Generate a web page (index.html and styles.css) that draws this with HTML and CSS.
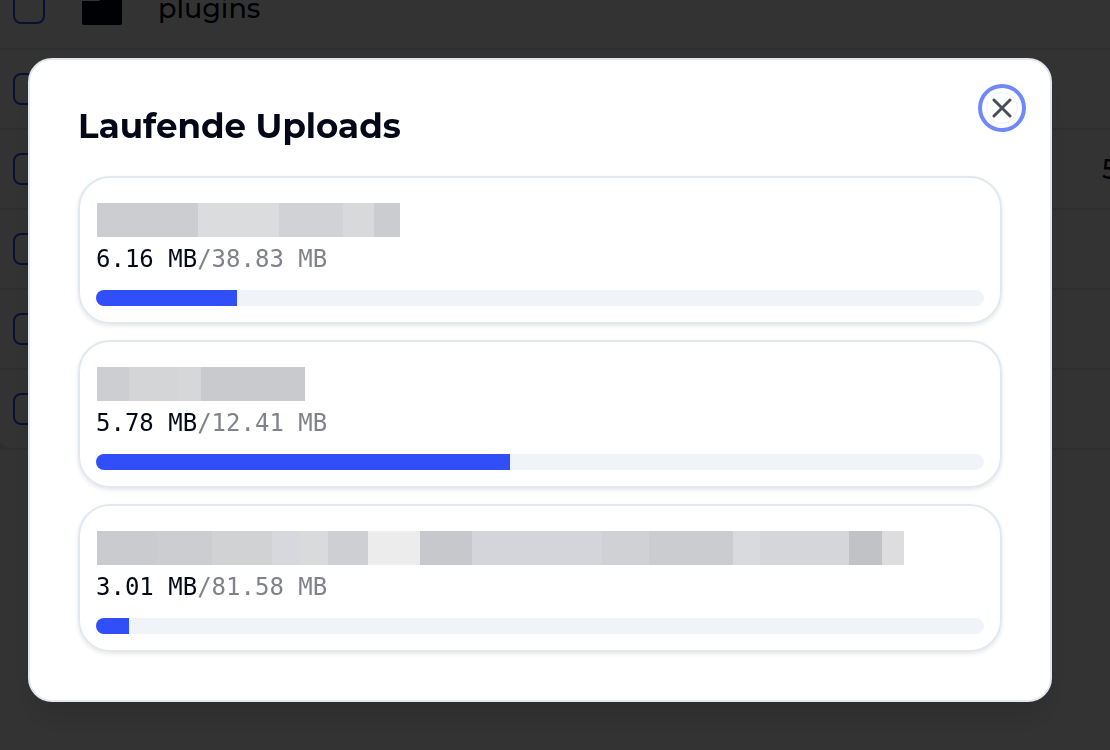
FILE: index.html
```html
<!DOCTYPE html>
<html lang="de">
<head>
    <meta charset="UTF-8">
    <meta name="viewport" content="width=device-width, initial-scale=1.0">
    <title>Laufende Uploads</title>
    <link rel="stylesheet" href="styles.css">
</head>
<body>
    <!-- File list behind the dialog -->
    <main class="files">
        <table class="files-table">
            <tbody>
                <tr>
                    <td class="check"><input type="checkbox" aria-label="plugins"></td>
                    <td class="icon">
                        <svg class="folder" viewBox="0 0 40 34" aria-hidden="true">
                            <path d="M20 0h18a2 2 0 0 1 2 2v30a2 2 0 0 1-2 2H2a2 2 0 0 1-2-2V10h17l3-3z"/>
                        </svg>
                    </td>
                    <td class="name">plugins</td>
                    <td class="size"></td>
                </tr>
                <tr>
                    <td class="check"><input type="checkbox" aria-label="Datei 2"></td>
                    <td class="icon"></td>
                    <td class="name"></td>
                    <td class="size"></td>
                </tr>
                <tr>
                    <td class="check"><input type="checkbox" aria-label="Datei 3"></td>
                    <td class="icon"></td>
                    <td class="name"></td>
                    <td class="size">5</td>
                </tr>
                <tr>
                    <td class="check"><input type="checkbox" aria-label="Datei 4"></td>
                    <td class="icon"></td>
                    <td class="name"></td>
                    <td class="size"></td>
                </tr>
                <tr>
                    <td class="check"><input type="checkbox" aria-label="Datei 5"></td>
                    <td class="icon"></td>
                    <td class="name"></td>
                    <td class="size"></td>
                </tr>
                <tr>
                    <td class="check"><input type="checkbox" aria-label="Datei 6"></td>
                    <td class="icon"></td>
                    <td class="name"></td>
                    <td class="size"></td>
                </tr>
            </tbody>
        </table>
    </main>

    <!-- Upload dialog -->
    <div class="overlay">
        <section class="modal" role="dialog" aria-modal="true" aria-labelledby="uploads-title">
            <h1 id="uploads-title">Laufende Uploads</h1>
            <button class="close" type="button" aria-label="Schließen">
                <svg viewBox="0 0 24 24" aria-hidden="true">
                    <path d="M4 4l16 16M20 4L4 20"/>
                </svg>
            </button>

            <div class="uploads">
                <article class="upload">
                    <div class="filename"><span class="redacted redacted-short"></span></div>
                    <label class="amount" for="upload-1">6.16 MB<span class="total">/38.83 MB</span></label>
                    <progress id="upload-1" value="6.16" max="38.83"></progress>
                </article>
                <article class="upload">
                    <div class="filename"><span class="redacted redacted-tiny"></span></div>
                    <label class="amount" for="upload-2">5.78 MB<span class="total">/12.41 MB</span></label>
                    <progress id="upload-2" value="5.78" max="12.41"></progress>
                </article>
                <article class="upload">
                    <div class="filename"><span class="redacted redacted-long"></span></div>
                    <label class="amount" for="upload-3">3.01 MB<span class="total">/81.58 MB</span></label>
                    <progress id="upload-3" value="3.01" max="81.58"></progress>
                </article>
            </div>
        </section>
    </div>
</body>
</html>
```

FILE: styles.css
```css
* {
    box-sizing: border-box;
}

body {
    margin: 0;
    font-family: Montserrat, Inter, sans-serif;
    color: #020817;
    background: #fff;
    overflow: hidden;
}

/* File list, scrolled so that the first row is cut */
.files {
    margin: -34px -200px 0 -4px;
    border: 2px solid #e2e8f0;
    border-radius: 16px;
    box-shadow: 0 2px 6px rgba(0, 0, 0, 0.2);
}

.files-table {
    width: 100%;
    table-layout: fixed;
    border-collapse: separate;
    border-spacing: 0;
    font-size: 27px;
    font-weight: 500;
}

.files-table td {
    height: 80px;
    padding: 0;
    border-bottom: 2px solid #e2e8f0;
}

.files-table tr:first-child td {
    height: 82px;
}

.files-table tr:last-child td {
    height: 78px;
    border-bottom: none;
}

.files-table .check {
    width: 84px;
    padding-left: 15px;
}

.files-table .icon {
    width: 76px;
}

.files-table .size {
    width: 206px;
}

.check input {
    appearance: none;
    display: block;
    width: 32px;
    height: 32px;
    margin: 0;
    border: 2px solid #304ffe;
    border-radius: 8px;
}

.folder {
    display: block;
    width: 40px;
    height: 34px;
    fill: #020817;
}

/* Dialog */
.overlay {
    position: fixed;
    inset: 0;
    padding: 58px 58px 48px 28px;
    background: rgba(0, 0, 0, 0.8);
}

.modal {
    position: relative;
    max-width: 1024px;
    padding: 48px;
    background: #fff;
    border: 2px solid #e2e8f0;
    border-radius: 24px;
    box-shadow: 0 20px 30px -6px rgba(0, 0, 0, 0.15);
}

.modal h1 {
    margin: 0 0 32px;
    font-size: 34px;
    line-height: 36px;
    font-weight: 700;
}

.close {
    position: absolute;
    top: 32px;
    right: 32px;
    display: flex;
    align-items: center;
    justify-content: center;
    width: 32px;
    height: 32px;
    padding: 0;
    border: 1px solid #eceffe;
    border-radius: 50%;
    background: #fff;
    box-shadow: 0 0 0 4px #fff, 0 0 0 8px #7088fb;
    cursor: pointer;
}

.close svg {
    width: 24px;
    height: 24px;
    flex: none;
    fill: none;
    stroke: #4a4e5a;
    stroke-width: 3;
    stroke-linecap: round;
}

.uploads {
    display: flex;
    flex-direction: column;
    gap: 16px;
}

.upload {
    display: flex;
    flex-direction: column;
    padding: 24px 16px 16px;
    border: 2px solid #e2e8f0;
    border-radius: 32px;
    box-shadow: 0 2px 4px rgba(0, 0, 0, 0.1);
}

.filename {
    display: flex;
    align-items: center;
    height: 36px;
    padding-left: 1px;
    margin-bottom: 4px;
}

.amount {
    margin-bottom: 14px;
    font-family: "DejaVu Sans Mono", monospace;
    font-size: 24px;
    line-height: 34px;
}

.amount .total {
    color: #808289;
}

progress {
    appearance: none;
    display: block;
    width: 100%;
    height: 16px;
    border: none;
    border-radius: 8px;
    background: #f0f4f9;
    overflow: hidden;
}

progress::-webkit-progress-bar {
    background: #f0f4f9;
}

progress::-webkit-progress-value {
    background: #304ff8;
}

/* Hidden file names */
.redacted {
    height: 34px;
}

.redacted-short {
    width: 303px;
    background: linear-gradient(to right,
        #cccdd1 101px,
        #dbdcde 101px 182px,
        #d1d2d6 182px 246px,
        #d8d9db 246px 277px,
        #cbccd0 277px);
}

.redacted-tiny {
    width: 208px;
    background: linear-gradient(to right,
        #cdced2 32px,
        #d4d5d7 32px 82px,
        #d6d7d9 82px 104px,
        #c9cacd 104px);
}

.redacted-long {
    width: 807px;
    background: linear-gradient(to right,
        #cacbcf 60px,
        #cccdd1 60px 115px,
        #d1d2d3 115px 175px,
        #d7d8dd 175px 203px,
        #d9dadc 203px 231px,
        #cecfd3 231px 271px,
        #ececec 271px 323px,
        #c7c8cc 323px 375px,
        #d4d5da 375px 505px,
        #d0d1d4 505px 552px,
        #cbcccf 552px 636px,
        #d9dade 636px 663px,
        #d5d6da 663px 752px,
        #c1c2c5 752px 785px,
        #dddddf 785px);
}
```
